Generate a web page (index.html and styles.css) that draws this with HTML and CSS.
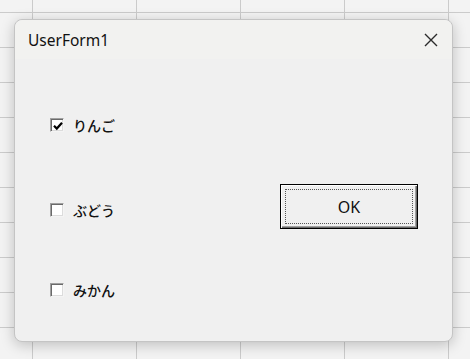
FILE: index.html
```html
<!DOCTYPE html>
<html lang="ja">
<head>
<meta charset="utf-8">
<title>UserForm1</title>
<link rel="stylesheet" href="styles.css">
</head>
<body>
<div class="sheet">
  <div class="dialog">
    <div class="titlebar">
      <span class="title">UserForm1</span>
      <span class="close">
        <svg width="14" height="14" viewBox="0 0 14 14"><path d="M1 1 L13 13 M13 1 L1 13" stroke="#2b2b2b" stroke-width="1.4" fill="none"/></svg>
      </span>
    </div>
    <div class="body">
      <div class="checks">
        <label class="check row1"><span class="box"><svg width="10" height="10" viewBox="0 0 10 10"><path d="M1 4.8 L3.8 7.6 L9 1.8" stroke="#000" stroke-width="2.2" fill="none"/></svg></span><span class="label">りんご</span></label>
        <label class="check row2"><span class="box"></span><span class="label">ぶどう</span></label>
        <label class="check row3"><span class="box"></span><span class="label">みかん</span></label>
      </div>
      <div class="btn"><span class="focus">OK</span></div>
    </div>
  </div>
</div>
</body>
</html>
```
FILE: styles.css
```css
html, body {
  margin: 0;
  padding: 0;
}
body {
  width: 470px;
  height: 359px;
  overflow: hidden;
  background-color: #f3f3f3;
  background-image:
    linear-gradient(to right, #cbcbcb 1px, transparent 1px),
    linear-gradient(to bottom, #cbcbcb 1px, transparent 1px);
  background-size: 104px 35px;
  background-position: 32px 12px;
}
.sheet {
  padding: 19px 0 0 14px;
}
.dialog {
  width: 439px;
  height: 323px;
  box-sizing: border-box;
  background: #f0f0f0;
  border: 1px solid #c4c4c4;
  border-radius: 8px;
  box-shadow: 0 3px 14px rgba(0, 0, 0, 0.22);
  display: flex;
  flex-direction: column;
}
.titlebar {
  height: 39px;
  background: #f2f2f0;
  border-radius: 8px 8px 0 0;
  display: flex;
  align-items: center;
  justify-content: space-between;
  padding: 0 14px 0 13px;
}
.title {
  font-family: "Noto Sans", sans-serif;
  font-size: 15.5px;
  color: #111;
  margin-top: 1px;
}
.close {
  display: flex;
  margin-top: 1px;
}
.body {
  display: flex;
  flex: 1;
}
.checks {
  display: flex;
  flex-direction: column;
  padding: 56px 0 0 35px;
  width: 230px;
}
.check {
  display: flex;
  align-items: center;
  height: 20px;
  font-family: "Noto Sans CJK JP", sans-serif;
  font-size: 14px;
  font-weight: 500;
  color: #111;
}
.row2 { margin-top: 65px; }
.row3 { margin-top: 60px; }
.box {
  width: 14px;
  height: 14px;
  box-sizing: border-box;
  background: #fff;
  border-style: solid;
  border-width: 1px;
  border-color: #a0a0a0 #f4f4f4 #f4f4f4 #a0a0a0;
  box-shadow: inset 1px 1px 0 #6a6a6a, inset -1px -1px 0 #dcdcdc;
  display: flex;
  align-items: center;
  justify-content: center;
  margin-right: 9px;
}
.box svg {
  margin: 1px 0 0 1px;
}
.btn {
  margin-top: 125px;
  width: 138px;
  height: 45px;
  box-sizing: border-box;
  border: 1px solid #000;
  background: #f0f0f0;
  box-shadow: inset 1px 1px 0 #ffffff, inset -1px -1px 0 #696969, inset -2px -2px 0 #a0a0a0;
  padding: 4px;
  display: flex;
}
.focus {
  flex: 1;
  border: 1px dotted #555;
  display: flex;
  align-items: center;
  justify-content: center;
  font-family: "Noto Sans", sans-serif;
  font-size: 16px;
  color: #111;
}
```
